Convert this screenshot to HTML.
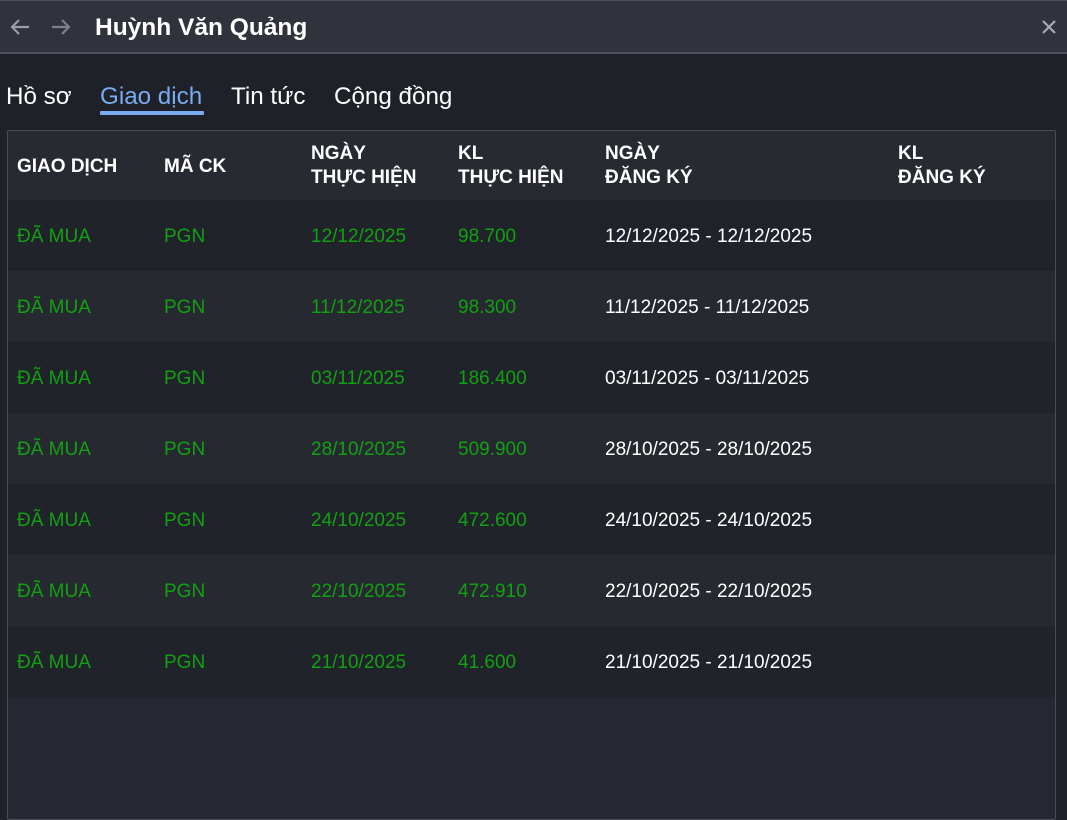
<!DOCTYPE html>
<html><head><meta charset="utf-8"><style>
*{margin:0;padding:0;box-sizing:border-box}
body{width:1067px;height:804px;background:#1e2128;font-family:"Liberation Sans",sans-serif;overflow:hidden;position:relative;color:#fff}
.top{position:absolute;left:0;top:0;width:1067px;height:54px;background:#30333b;border-top:1px solid #4a4d55;border-bottom:2px solid #4d5058}
.title{position:absolute;left:95px;top:13px;font-size:24.5px;font-weight:bold;color:#fff}
.tabs{position:absolute;top:83px;font-size:24.2px}
.tab{position:absolute;white-space:nowrap}
.ul{position:absolute;left:100px;top:111px;width:104px;height:4px;background:#7aaaf0;border-radius:1px}
.tbl{position:absolute;left:7px;top:130px;width:1049px;height:690px;background:#252830;border:1px solid #4a4d55;border-radius:2px}
.row{position:absolute;left:0;width:1047px;height:71px}
.c{position:absolute;font-size:19px;white-space:nowrap}
.h .c{font-size:19px;font-weight:bold;line-height:24px}
.g{color:#12a012}
</style></head><body>
<div class="top">
<svg style="position:absolute;left:9px;top:16px" width="22" height="20" viewBox="0 0 22 20"><path d="M20 10H3M10 3L3 10L10 17" stroke="#9a9ea6" stroke-width="2.2" fill="none"/></svg>
<svg style="position:absolute;left:50px;top:16px" width="22" height="20" viewBox="0 0 22 20"><path d="M2 10H19M12 3L19 10L12 17" stroke="#7d8189" stroke-width="2.2" fill="none"/></svg>
<div class="title">Huỳnh Văn Quảng</div>
<svg style="position:absolute;left:1042px;top:19px" width="14" height="14" viewBox="0 0 14 14"><path d="M1 1L13 13M13 1L1 13" stroke="#a5a9b0" stroke-width="2.2"/></svg>
</div>
<div class="tabs">
<div class="tab" style="left:6px">Hồ sơ</div>
<div class="tab" style="left:100px;color:#7aaaf0">Giao dịch</div>
<div class="tab" style="left:231px">Tin tức</div>
<div class="tab" style="left:334px">Cộng đồng</div>
</div>
<div class="ul"></div>
<div class="tbl">
<div class="row h" style="top:0;height:69px;background:#272a31">
<div class="c" style="left:9px;top:24px">GIAO DỊCH</div>
<div class="c" style="left:156px;top:24px">MÃ CK</div>
<div class="c" style="left:303px;top:11px">NGÀY<br>THỰC HIỆN</div>
<div class="c" style="left:450px;top:11px">KL<br>THỰC HIỆN</div>
<div class="c" style="left:597px;top:11px">NGÀY<br>ĐĂNG KÝ</div>
<div class="c" style="left:890px;top:11px">KL<br>ĐĂNG KÝ</div>
</div>
<div id="rows"></div>
</div>
<script>
var d=[["12/12/2025","98.700"],["11/12/2025","98.300"],["03/11/2025","186.400"],["28/10/2025","509.900"],["24/10/2025","472.600"],["22/10/2025","472.910"],["21/10/2025","41.600"]];
var h="";d.forEach(function(r,i){h+='<div class="row" style="top:'+(69+i*71)+'px;background:'+(i%2?'#262930':'#20232a')+'">'+
'<div class="c g" style="left:9px;top:26px">ĐÃ MUA</div><div class="c g" style="left:156px;top:26px">PGN</div>'+
'<div class="c g" style="left:303px;top:26px">'+r[0]+'</div><div class="c g" style="left:450px;top:26px">'+r[1]+'</div>'+
'<div class="c" style="left:597px;top:26px">'+r[0]+' - '+r[0]+'</div></div>';});
document.getElementById("rows").outerHTML=h;
</script>
</body></html>
